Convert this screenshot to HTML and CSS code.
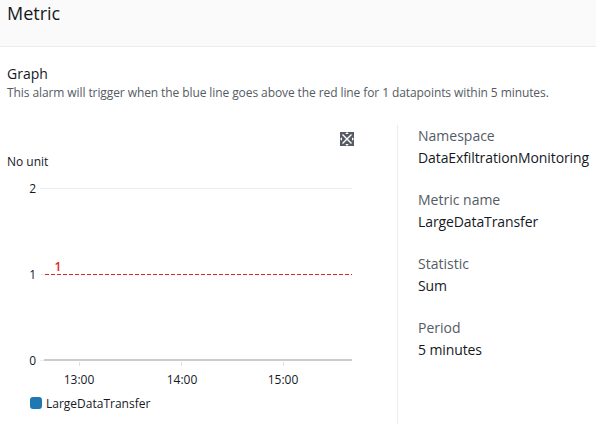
FILE: index.html
```html
<!DOCTYPE html>
<html>
<head>
<meta charset="utf-8">
<link rel="stylesheet" href="styles.css">
</head>
<body>
<header class="head">
  <h2 class="title">Metric</h2>
</header>
<main class="content">
  <div class="graph-head">
    <h3 class="graph-title">Graph</h3>
    <p class="graph-desc">This alarm will trigger when the blue line goes above the red line for 1 datapoints within 5 minutes.</p>
  </div>
  <div class="cols">
    <div class="chart">
      <div class="chart-top">
        <svg class="expand" width="14" height="14" viewBox="0 0 14 14">
          <rect x="0" y="0" width="14" height="14" fill="#545b64"/>
          <path d="M2.5 2.5 L11.5 11.5 M11.5 2.5 L2.5 11.5" stroke="#fff" stroke-width="1.4"/>
          <path d="M7 0 L5.2 2 L8.8 2 Z M7 14 L5.2 12 L8.8 12 Z M0 7 L2 5.2 L2 8.8 Z M14 7 L12 5.2 L12 8.8 Z" fill="#fff"/>
        </svg>
      </div>
      <div class="unit">No unit</div>
      <svg class="plot" width="397" height="221" viewBox="0 0 397 221">
        <line x1="40" y1="18.5" x2="352" y2="18.5" class="grid"/>
        <line x1="40" y1="104.5" x2="45" y2="104.5" class="grid"/>
        <line x1="40" y1="190.5" x2="352" y2="190.5" class="grid"/>
        <line x1="45" y1="104.5" x2="352" y2="104.5" class="threshold"/>
        <line x1="44" y1="190" x2="352" y2="190" class="axis"/>
        <line x1="79.5" y1="192" x2="79.5" y2="196" class="tick"/>
        <line x1="181.5" y1="192" x2="181.5" y2="196" class="tick"/>
        <line x1="283.5" y1="192" x2="283.5" y2="196" class="tick"/>
        <text x="36" y="23" text-anchor="end" class="ylabel">2</text>
        <text x="36" y="109" text-anchor="end" class="ylabel">1</text>
        <text x="36" y="195" text-anchor="end" class="ylabel">0</text>
        <text x="58" y="101" text-anchor="middle" class="tlabel">1</text>
        <text x="79" y="214" text-anchor="middle" class="xlabel">13:00</text>
        <text x="182" y="214" text-anchor="middle" class="xlabel">14:00</text>
        <text x="283" y="214" text-anchor="middle" class="xlabel">15:00</text>
      </svg>
      <div class="legend"><span class="swatch"></span><span>LargeDataTransfer</span></div>
    </div>
    <dl class="details">
      <div class="item"><dt>Namespace</dt><dd>DataExfiltrationMonitoring</dd></div>
      <div class="item"><dt>Metric name</dt><dd>LargeDataTransfer</dd></div>
      <div class="item"><dt>Statistic</dt><dd>Sum</dd></div>
      <div class="item"><dt>Period</dt><dd>5 minutes</dd></div>
    </dl>
  </div>
</main>
</body>
</html>
```
FILE: styles.css
```css
* { box-sizing: border-box; }
html, body { margin: 0; padding: 0; background: #fff; }
body {
  font-family: "Open Sans", "Noto Sans", sans-serif;
  color: #16191f;
  width: 596px;
  height: 424px;
  overflow: hidden;
}
.head {
  height: 47px;
  background: #fafafa;
  border-bottom: 1px solid #eaeded;
  padding: 0 7px;
}
.title {
  margin: 0;
  font-size: 18px;
  font-weight: 400;
  line-height: 27px;
}
.graph-head {
  padding: 17px 7px 0;
}
.graph-title {
  margin: 0;
  font-size: 14px;
  font-weight: 400;
  line-height: 20px;
}
.graph-desc {
  margin: 1px 0 0;
  font-size: 12px;
  line-height: 16px;
  letter-spacing: -0.09px;
  color: #545b64;
}
.cols {
  display: flex;
  margin-top: 24px;
}
.chart {
  width: 397px;
  flex: none;
}
.chart-top {
  display: flex;
  justify-content: flex-end;
  padding: 7px 43px 0 0;
  height: 21px;
}
.expand { display: block; }
.unit {
  margin-top: 8px;
  padding-left: 7px;
  font-size: 12px;
  line-height: 16px;
}
.plot { display: block; }
.grid { stroke: #eaeded; stroke-width: 1; }
.threshold { stroke: #e02424; stroke-width: 1; stroke-dasharray: 4 2; }
.axis { stroke: #cccccc; stroke-width: 2; }
.tick { stroke: #e0e0e0; stroke-width: 1; }
.plot text { font-family: "Open Sans", "Noto Sans", sans-serif; font-size: 12px; fill: #16191f; }
.plot .tlabel { fill: #e02424; font-weight: 600; }
.legend {
  display: flex;
  align-items: center;
  gap: 4px;
  height: 24px;
  padding-left: 30px;
  font-size: 12px;
}
.swatch {
  width: 12px;
  height: 12px;
  border-radius: 3px;
  background: #1f77b4;
}
.details {
  margin: 0;
  border-left: 1px solid #eaeded;
  padding-left: 20px;
  height: 320px;
  display: flex;
  flex-direction: column;
  gap: 20px;
}
.item dt {
  font-size: 14px;
  line-height: 22px;
  color: #545b64;
}
.item dd {
  margin: 0;
  font-size: 14px;
  line-height: 22px;
  letter-spacing: -0.1px;
  color: #16191f;
}
```
